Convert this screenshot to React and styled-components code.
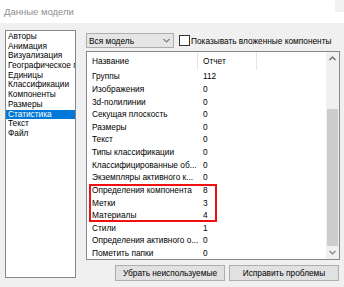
import styled, { createGlobalStyle } from "styled-components";

const Global = createGlobalStyle`
  html, body {
    margin: 0;
    padding: 0;
    background: #f0f0f0;
  }
  body {
    font-family: "Liberation Sans", Arial, sans-serif;
    font-size: 8.3px;
    color: #000;
  }
`;

const Window = styled.div`
  width: 344px;
  height: 287px;
  display: flex;
  flex-direction: column;
  background: #f0f0f0;
  overflow: hidden;
`;

const TitleBar = styled.div`
  height: 23px;
  flex: none;
  display: flex;
  align-items: center;
  justify-content: space-between;
  padding-left: 4px;
  background: #fff;
  color: #8e8e8e;
  font-size: 9.5px;
`;

const CloseStub = styled.div`
  align-self: flex-start;
  width: 9px;
  height: 12px;
  background: #f2f2f2;
`;

const Body = styled.div`
  flex: 1;
  display: flex;
  align-items: flex-start;
  gap: 10px;
  padding: 7px 4px 0 5px;
`;

const SideList = styled.ul`
  list-style: none;
  margin: 0;
  padding: 1px 0 0;
  width: 69px;
  height: 245px;
  flex: none;
  border: 1px solid #828790;
  background: #fff;
  overflow: hidden;
`;

const SideItem = styled.li`
  height: 9.7px;
  line-height: 9.7px;
  padding-left: 2px;
  white-space: nowrap;
  overflow: hidden;
  background: ${(p) => (p.$active ? "#0078d7" : "transparent")};
  color: ${(p) => (p.$active ? "#fff" : "#000")};
`;

const Main = styled.div`
  flex: 1;
  min-width: 0;
  display: flex;
  flex-direction: column;
  padding-top: 3px;
`;

const Toolbar = styled.div`
  display: flex;
  align-items: center;
  height: 15px;
  gap: 5px;
  overflow: hidden;
`;

const Dropdown = styled.div`
  width: 81px;
  height: 13px;
  flex: none;
  display: flex;
  align-items: center;
  justify-content: space-between;
  padding: 0 3px 0 2px;
  box-sizing: content-box;
  border: 1px solid #adadad;
  background: #e5e5e5;
`;

const CheckLabel = styled.label`
  display: flex;
  align-items: center;
  gap: 1px;
  white-space: nowrap;
`;

const CheckBox = styled.span`
  width: 9px;
  height: 9px;
  flex: none;
  border: 1px solid #333;
  background: #fff;
`;

const Table = styled.div`
  margin-top: 3px;
  height: 207px;
  border: 1px solid #828790;
  background: #fff;
  display: flex;
`;

const TableBody = styled.div`
  flex: 1;
  min-width: 0;
  display: flex;
  flex-direction: column;
  overflow: hidden;
`;

const HeaderRow = styled.div`
  height: 18px;
  flex: none;
  display: grid;
  grid-template-columns: 111px 59px;
  align-items: stretch;
`;

const HeaderCell = styled.div`
  display: flex;
  align-items: center;
  padding-left: 5px;
  border-right: 1px solid #e5e5e5;
`;

const Row = styled.div`
  height: 12.64px;
  flex: none;
  display: grid;
  grid-template-columns: 111px 59px;
  align-items: center;
  white-space: nowrap;
`;

const NameCell = styled.span`
  padding-left: 5px;
  overflow: hidden;
`;

const ValueCell = styled.span`
  padding-left: 5px;
`;

const Marked = styled.div`
  position: relative;
  flex: none;
  &::after {
    content: "";
    position: absolute;
    top: 0;
    bottom: 0;
    left: 2px;
    width: 124px;
    border: 2px solid #f01010;
  }
`;

const ScrollBar = styled.div`
  width: 13px;
  flex: none;
  display: flex;
  flex-direction: column;
  background: #f0f0f0;
`;

const ScrollArrow = styled.div`
  height: 13px;
  display: flex;
  align-items: center;
  justify-content: center;
  flex: none;
`;

const Track = styled.div`
  flex: 1;
  display: flex;
  flex-direction: column;
  padding: 0 1px;
`;

const Thumb = styled.div`
  margin-top: auto;
  height: 137px;
  background: #cdcdcd;
`;

const Buttons = styled.div`
  margin-top: 5px;
  display: flex;
  justify-content: flex-end;
  gap: 4px;
  padding-right: 1px;
`;

const Button = styled.button`
  width: 110px;
  height: 16px;
  padding: 0;
  border: 1px solid #adadad;
  background: #e1e1e1;
  font: inherit;
  color: #000;
`;

const Chevron = ({ up }) => (
  <svg width="7" height="5" viewBox="0 0 7 5">
    <path
      d={up ? "M0.5 4 L3.5 1 L6.5 4" : "M0.5 1 L3.5 4 L6.5 1"}
      fill="none"
      stroke={up ? "#606060" : "#808080"}
      strokeWidth="1.2"
    />
  </svg>
);

const sections = [
  "Авторы",
  "Анимация",
  "Визуализация",
  "Географическое положение",
  "Единицы",
  "Классификации",
  "Компоненты",
  "Размеры",
  "Статистика",
  "Текст",
  "Файл",
];

const before = [
  ["Группы", "112"],
  ["Изображения", "0"],
  ["3d-полилинии", "0"],
  ["Секущая плоскость", "0"],
  ["Размеры", "0"],
  ["Текст", "0"],
  ["Типы классификации", "0"],
  ["Классифицированные об...", "0"],
  ["Экземпляры активного к...", "0"],
];

const marked = [
  ["Определения компонента", "8"],
  ["Метки", "3"],
  ["Материалы", "4"],
];

const after = [
  ["Стили", "1"],
  ["Определения активного о...", "0"],
  ["Пометить папки", "0"],
];

const renderRows = (rows) =>
  rows.map(([name, value]) => (
    <Row key={name}>
      <NameCell>{name}</NameCell>
      <ValueCell>{value}</ValueCell>
    </Row>
  ));

export default function App() {
  return (
    <Window>
      <Global />
      <TitleBar>
        Данные модели
        <CloseStub />
      </TitleBar>
      <Body>
        <SideList>
          {sections.map((s) => (
            <SideItem key={s} $active={s === "Статистика"}>
              {s}
            </SideItem>
          ))}
        </SideList>
        <Main>
          <Toolbar>
            <Dropdown>
              Вся модель
              <Chevron />
            </Dropdown>
            <CheckLabel>
              <CheckBox />
              Показывать вложенные компоненты
            </CheckLabel>
          </Toolbar>
          <Table>
            <TableBody>
              <HeaderRow>
                <HeaderCell>Название</HeaderCell>
                <HeaderCell>Отчет</HeaderCell>
              </HeaderRow>
              {renderRows(before)}
              <Marked>{renderRows(marked)}</Marked>
              {renderRows(after)}
            </TableBody>
            <ScrollBar>
              <ScrollArrow>
                <Chevron up />
              </ScrollArrow>
              <Track>
                <Thumb />
              </Track>
              <ScrollArrow>
                <Chevron />
              </ScrollArrow>
            </ScrollBar>
          </Table>
          <Buttons>
            <Button>Убрать неиспользуемые</Button>
            <Button>Исправить проблемы</Button>
          </Buttons>
        </Main>
      </Body>
    </Window>
  );
}
